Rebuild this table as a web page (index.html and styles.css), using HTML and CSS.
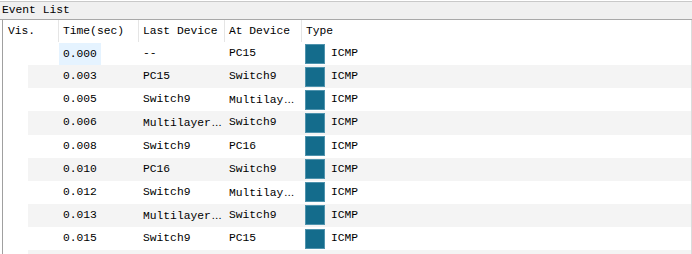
FILE: index.html
```html
<!DOCTYPE html>
<html>
<head>
<meta charset="utf-8">
<link rel="stylesheet" href="styles.css">
</head>
<body>
<div class="window">
  <div class="titlebar">Event List</div>
  <div class="list">
    <div class="header">
      <div class="hcell">Vis.</div>
      <div class="hcell">Time(sec)</div>
      <div class="hcell">Last Device</div>
      <div class="hcell">At Device</div>
      <div class="hcell last">Type</div>
    </div>
    <div class="rows">
      <div class="row"><div class="cell"><span class="sel">0.000</span></div><div class="cell">--</div><div class="cell">PC15</div><div class="cell type"><span class="sq"></span>ICMP</div></div>
      <div class="row alt"><div class="cell">0.003</div><div class="cell">PC15</div><div class="cell">Switch9</div><div class="cell type"><span class="sq"></span>ICMP</div></div>
      <div class="row"><div class="cell">0.005</div><div class="cell">Switch9</div><div class="cell">Multilay<span class="ell">⋯</span></div><div class="cell type"><span class="sq"></span>ICMP</div></div>
      <div class="row alt"><div class="cell">0.006</div><div class="cell">Multilayer<span class="ell">⋯</span></div><div class="cell">Switch9</div><div class="cell type"><span class="sq"></span>ICMP</div></div>
      <div class="row"><div class="cell">0.008</div><div class="cell">Switch9</div><div class="cell">PC16</div><div class="cell type"><span class="sq"></span>ICMP</div></div>
      <div class="row alt"><div class="cell">0.010</div><div class="cell">PC16</div><div class="cell">Switch9</div><div class="cell type"><span class="sq"></span>ICMP</div></div>
      <div class="row"><div class="cell">0.012</div><div class="cell">Switch9</div><div class="cell">Multilay<span class="ell">⋯</span></div><div class="cell type"><span class="sq"></span>ICMP</div></div>
      <div class="row alt"><div class="cell">0.013</div><div class="cell">Multilayer<span class="ell">⋯</span></div><div class="cell">Switch9</div><div class="cell type"><span class="sq"></span>ICMP</div></div>
      <div class="row"><div class="cell">0.015</div><div class="cell">Switch9</div><div class="cell">PC15</div><div class="cell type"><span class="sq"></span>ICMP</div></div>
      <div class="row alt"><div class="cell"></div><div class="cell"></div><div class="cell"></div><div class="cell"></div></div>
    </div>
  </div>
</div>
</body>
</html>
```

FILE: styles.css
```css
html, body {
  margin: 0;
  padding: 0;
  background: #ffffff;
  width: 692px;
  height: 254px;
  overflow: hidden;
}
body {
  font-family: "Liberation Mono", "DejaVu Sans Mono", monospace;
  font-size: 11.3px;
  color: #000;
}
.window {
  padding-top: 1px;
  height: 253px;
  display: flex;
  flex-direction: column;
}
.titlebar {
  border-top: 1px solid #c9c9c9;
  border-bottom: 1px solid #a8a8a8;
  background: #f0f0f0;
  height: 17px;
  line-height: 17px;
  padding-left: 2px;
  white-space: nowrap;
}
.list {
  flex: 1;
  margin-left: 2px;
  border-left: 1px solid #a0a0a0;
  border-right: 1px solid #dcdcdc;
  overflow: hidden;
  background: #fff;
}
.header {
  display: grid;
  grid-template-columns: 56px 80px 86px 77px 1fr;
  height: 22px;
}
.hcell {
  border-right: 1px solid #e5e5e5;
  line-height: 22px;
  padding-left: 4px;
  white-space: nowrap;
}
.hcell:first-child {
  padding-left: 5px;
}
.hcell.last {
  border-right: none;
}
.row {
  margin-left: 25px;
  display: grid;
  grid-template-columns: 31px 80px 86px 77px 1fr;
  height: 23.125px;
}
.row.alt {
  background: #f4f4f4;
}
.cell {
  line-height: 23px;
  padding-left: 4px;
  white-space: nowrap;
  overflow: hidden;
}
.cell:first-child {
  grid-column: 2;
  padding-left: 4px;
}
.ell {
  font-family: "Noto Sans CJK SC", "DejaVu Sans", sans-serif;
  font-size: 9px;
  margin-left: 1px;
}
.sel {
  display: inline-block;
  background: #e5f3ff;
  margin-left: -4px;
  padding: 0 4px;
  line-height: 22px;
  margin-top: 1px;
}
.type {
  display: flex;
  align-items: center;
  padding-left: 3px;
  gap: 6px;
}
.sq {
  width: 18px;
  height: 18px;
  background: #146c8c;
  border: 1px solid #4f93ad;
  flex: none;
}
```
